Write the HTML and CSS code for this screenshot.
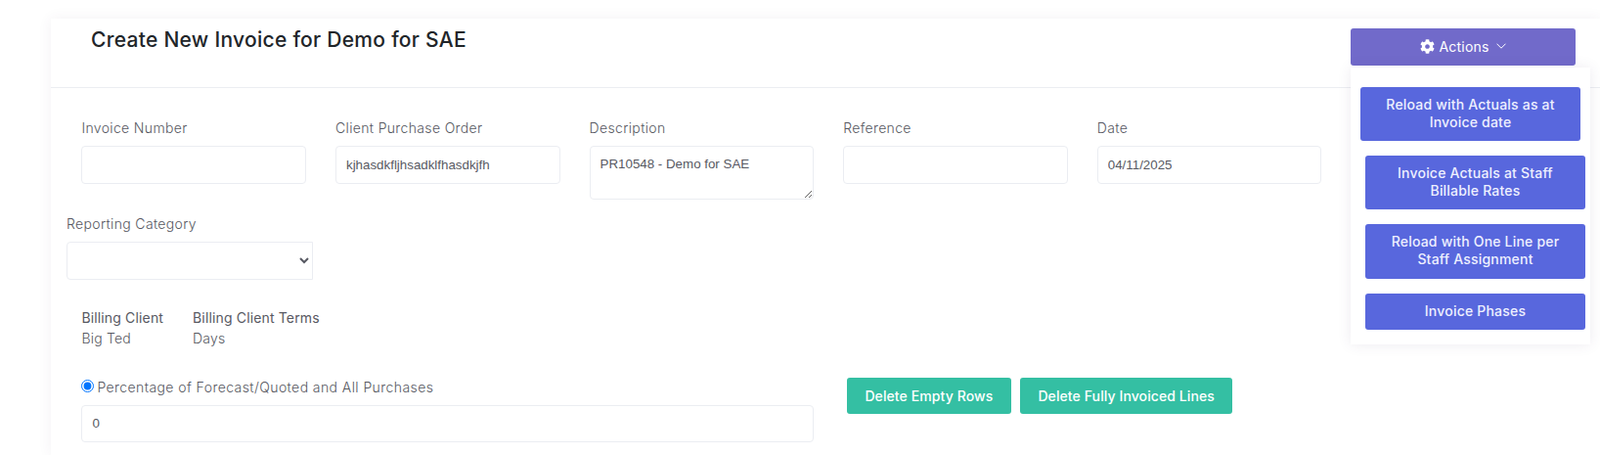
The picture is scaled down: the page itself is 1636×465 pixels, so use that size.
FILE: index.html
```html
<!DOCTYPE html>
<html lang="en">
<head>
<meta charset="utf-8">
<title>Create New Invoice</title>
<link rel="stylesheet" href="styles.css">
</head>
<body>
<main class="card">
  <header class="card-head">
    <h1 class="title">Create New Invoice for Demo for SAE</h1>
    <div class="actions">
      <button class="btn-actions" type="button">
        <svg class="gear" viewBox="0 0 512 512" aria-hidden="true"><path d="M487.4 315.7l-42.6-24.6c4.3-23.2 4.3-47 0-70.2l42.6-24.6c4.9-2.8 7.1-8.6 5.5-14-11.1-35.6-30-67.8-54.7-94.6-3.8-4.1-10-5.1-14.8-2.3L380.8 110c-17.9-15.4-38.5-27.3-60.8-35.1V25.8c0-5.6-3.9-10.5-9.4-11.7-36.7-8.2-74.3-7.8-109.2 0-5.5 1.2-9.4 6.1-9.4 11.7V75c-22.2 7.9-42.8 19.8-60.8 35.1L88.7 85.5c-4.9-2.8-11-1.9-14.8 2.3-24.7 26.7-43.6 58.9-54.7 94.6-1.7 5.4.6 11.2 5.5 14L67.3 221c-4.3 23.2-4.3 47 0 70.2l-42.6 24.6c-4.9 2.8-7.1 8.6-5.5 14 11.1 35.6 30 67.8 54.7 94.6 3.8 4.1 10 5.1 14.8 2.3l42.6-24.6c17.9 15.4 38.5 27.3 60.8 35.1v49.2c0 5.6 3.9 10.5 9.4 11.7 36.7 8.2 74.3 7.8 109.2 0 5.5-1.2 9.4-6.1 9.4-11.7v-49.2c22.2-7.9 42.8-19.8 60.8-35.1l42.6 24.6c4.9 2.8 11 1.9 14.8-2.3 24.7-26.7 43.6-58.9 54.7-94.6 1.5-5.5-.7-11.3-5.6-14.1zM256 336c-44.1 0-80-35.9-80-80s35.9-80 80-80 80 35.9 80 80-35.9 80-80 80z"/></svg>
        <span>Actions</span>
        <svg class="chev" viewBox="0 0 10 6" aria-hidden="true"><path d="M.5.7 5 5.2 9.5.7"/></svg>
      </button>
      <div class="menu">
        <button class="menu-btn first" type="button">Reload with Actuals as at Invoice date</button>
        <button class="menu-btn" type="button">Invoice Actuals at Staff Billable Rates</button>
        <button class="menu-btn tall" type="button">Reload with One Line per Staff Assignment</button>
        <button class="menu-btn short" type="button">Invoice Phases</button>
      </div>
    </div>
  </header>

  <section class="fields">
    <div class="field"><label class="lbl">Invoice Number</label><input class="ctl" type="text"></div>
    <div class="field"><label class="lbl">Client Purchase Order</label><input class="ctl" type="text" value="kjhasdkfljhsadklfhasdkjfh"></div>
    <div class="field"><label class="lbl">Description</label><textarea class="ctl area">PR10548 - Demo for SAE</textarea></div>
    <div class="field"><label class="lbl">Reference</label><input class="ctl" type="text"></div>
    <div class="field"><label class="lbl">Date</label><input class="ctl" type="text" value="04/11/2025"></div>
  </section>

  <section class="category">
    <label class="lbl">Reporting Category</label>
    <select class="ctl pick"><option></option></select>
  </section>

  <section class="billing">
    <div><div class="b-key">Billing Client</div><div class="b-val">Big Ted</div></div>
    <div><div class="b-key">Billing Client Terms</div><div class="b-val">Days</div></div>
  </section>

  <section class="bottom">
    <div class="pct">
      <label class="radio-line"><input class="radio" type="radio" checked><span class="radio-text">Percentage of Forecast/Quoted and All Purchases</span></label>
      <input class="ctl short-ctl" type="text" value="0">
    </div>
    <div class="del">
      <button class="green" type="button">Delete Empty Rows</button>
      <button class="green" type="button">Delete Fully Invoiced Lines</button>
    </div>
  </section>
</main>
</body>
</html>
```

FILE: styles.css
```css
* { box-sizing: border-box; }
html, body { margin: 0; height: 465px; overflow: hidden; background: #fff; }
body { font-family: Inter, "Open Sans", sans-serif; color: #575962; }

.card {
  margin: 19px 0 0 52px;
  height: 446px;
  background: #fff;
  box-shadow: 0 0 13px rgba(82, 63, 105, .07);
}
.card-head {
  height: 71px;
  border-bottom: 1px solid #ebedf2;
  display: flex;
  justify-content: space-between;
  align-items: flex-start;
  padding: 0 25px 0 41px;
}
.title {
  margin: 8px 0 0;
  font-size: 21px;
  line-height: 28px;
  font-weight: 500;
  color: #212529;
  letter-spacing: .28px;
}
.actions { position: relative; width: 230px; margin-top: 10px; }
.btn-actions {
  width: 230px;
  height: 38px;
  border: 0;
  border-radius: 3px;
  background: #716aca;
  color: #fff;
  font: 400 14px Inter, sans-serif;
  letter-spacing: .2px;
  display: flex;
  align-items: center;
  justify-content: center;
  padding: 0 0 2px;
}
.gear { width: 15px; height: 15px; fill: #fff; margin-right: 4px; }
.chev { width: 10px; height: 6px; margin-left: 7px; fill: none; stroke: #fff; stroke-width: 1; }
.menu {
  position: absolute;
  left: 0;
  top: 40px;
  width: 245px;
  height: 283px;
  padding: 20px 5px 0 10px;
  background: #fff;
  box-shadow: 0 0 13px rgba(82, 63, 105, .1);
  display: flex;
  flex-direction: column;
  z-index: 2;
}
.menu-btn {
  width: 225px;
  height: 55px;
  margin: 15px 0 0 5px;
  border: 0;
  border-radius: 3px;
  background: #5867dd;
  color: #eef0ff;
  font: 500 14px/18px Inter, sans-serif;
  letter-spacing: .2px;
  padding: 0 22px 2px;
  flex: none;
}
.menu-btn.first { margin: 0; }
.menu-btn.tall { height: 56px; }
.menu-btn.short { height: 37px; }

.fields {
  display: grid;
  grid-template-columns: repeat(5, 229.6px);
  column-gap: 30px;
  padding: 31px 0 0 31.4px;
  height: 129px;
}
.lbl { display: block; font-size: 14px; font-weight: 300; letter-spacing: .35px; line-height: 20px; margin-bottom: 8px; color: #575962; }
.ctl {
  display: block;
  width: 100%;
  height: 38.5px;
  border: 1px solid #ebedf2;
  border-radius: 4px;
  background: #fff;
  padding: 0 10px;
  font: 400 13.333px "Liberation Sans", Arial, sans-serif;
  color: #575962;
  outline: 0;
}
.area { height: 55px; padding: 10px 10px 0; line-height: 16px; resize: both; }
.short-ctl { height: 37.5px; }

.category { padding: 0 0 0 16px; width: 268px; }
.pick { border-radius: 4px 0 0 4px; }

.billing {
  display: flex;
  gap: 30px;
  padding: 28px 0 0 31.4px;
  font-size: 14px;
  line-height: 21px;
}
.b-key { font-weight: 400; letter-spacing: .15px; }
.b-val { font-weight: 300; letter-spacing: .2px; }

.bottom {
  display: flex;
  padding: 28.5px 0 0 31.4px;
}
.pct { width: 748.5px; }
.radio-line { display: flex; align-items: center; font-size: 14px; font-weight: 300; letter-spacing: .42px; line-height: 20px; height: 20px; margin-bottom: 10px; }
.radio { margin: 0 3px 0 0; width: 13px; height: 13px; accent-color: #0075ff; }
.radio-text { padding-top: 3px; }
.del { display: flex; gap: 9px; margin-left: 34px; margin-top: 2px; align-self: flex-start; }
.green {
  height: 37px;
  border: 0;
  border-radius: 3px;
  background: #34bfa3;
  color: #fff;
  font: 500 14px Inter, sans-serif;
  letter-spacing: .1px;
  padding: 0 18.5px;
}
```
